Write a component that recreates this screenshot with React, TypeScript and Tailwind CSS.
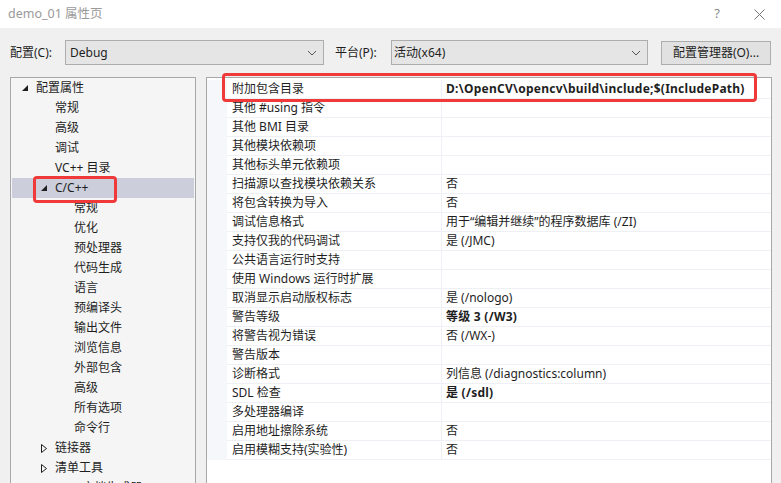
import React from 'react';

const font = { fontFamily: '"Noto Sans", "Noto Sans CJK SC", sans-serif' };

const Down = () => (
  <svg width="6" height="6" viewBox="0 0 6 6" className="shrink-0">
    <polygon points="6,0 6,6 0,6" fill="#1e1e1e" />
  </svg>
);

const Right = () => (
  <svg width="6" height="9" viewBox="0 0 6 9" className="shrink-0">
    <polygon points="0.5,0.5 5.5,4.5 0.5,8.5" fill="none" stroke="#1e1e1e" strokeWidth="1" />
  </svg>
);

const Chevron = () => (
  <svg width="10" height="6" viewBox="0 0 10 6">
    <polyline points="1,1 5,5 9,1" fill="none" stroke="#555" strokeWidth="1" />
  </svg>
);

type TreeItem = { label: string; level: number; arrow?: 'down' | 'right'; selected?: boolean };

const tree: TreeItem[] = [
  { label: '配置属性', level: 0, arrow: 'down' },
  { label: '常规', level: 1 },
  { label: '高级', level: 1 },
  { label: '调试', level: 1 },
  { label: 'VC++ 目录', level: 1 },
  { label: 'C/C++', level: 1, arrow: 'down', selected: true },
  { label: '常规', level: 2 },
  { label: '优化', level: 2 },
  { label: '预处理器', level: 2 },
  { label: '代码生成', level: 2 },
  { label: '语言', level: 2 },
  { label: '预编译头', level: 2 },
  { label: '输出文件', level: 2 },
  { label: '浏览信息', level: 2 },
  { label: '外部包含', level: 2 },
  { label: '高级', level: 2 },
  { label: '所有选项', level: 2 },
  { label: '命令行', level: 2 },
  { label: '链接器', level: 1, arrow: 'right' },
  { label: '清单工具', level: 1, arrow: 'right' },
  { label: 'XML 文档生成器', level: 1, arrow: 'right' },
];

const props: { name: string; value: string; bold?: boolean }[] = [
  { name: '附加包含目录', value: 'D:\\OpenCV\\opencv\\build\\include;$(IncludePath)', bold: true },
  { name: '其他 #using 指令', value: '' },
  { name: '其他 BMI 目录', value: '' },
  { name: '其他模块依赖项', value: '' },
  { name: '其他标头单元依赖项', value: '' },
  { name: '扫描源以查找模块依赖关系', value: '否' },
  { name: '将包含转换为导入', value: '否' },
  { name: '调试信息格式', value: '用于“编辑并继续”的程序数据库 (/ZI)' },
  { name: '支持仅我的代码调试', value: '是 (/JMC)' },
  { name: '公共语言运行时支持', value: '' },
  { name: '使用 Windows 运行时扩展', value: '' },
  { name: '取消显示启动版权标志', value: '是 (/nologo)' },
  { name: '警告等级', value: '等级 3 (/W3)', bold: true },
  { name: '将警告视为错误', value: '否 (/WX-)' },
  { name: '警告版本', value: '' },
  { name: '诊断格式', value: '列信息 (/diagnostics:column)' },
  { name: 'SDL 检查', value: '是 (/sdl)', bold: true },
  { name: '多处理器编译', value: '' },
  { name: '启用地址擦除系统', value: '否' },
  { name: '启用模糊支持(实验性)', value: '否' },
];

// arrow column is 14px, so text lands at x = 36 / 55 / 74
const indent = ['pl-[10px]', 'pl-[29px]', 'pl-[48px]'];

export default function App() {
  return (
    <div className="relative w-[781px] h-[483px] overflow-hidden bg-[#f0f0f0] text-[12px] text-[#1e1e1e]" style={font}>
      <div className="h-[28px] bg-white flex items-center pl-[8px] pr-[16px]">
        <span className="text-[#9a9a9a] text-[12.5px]">demo_01 属性页</span>
        <span className="ml-auto text-[#8a8a8a] text-[13px] mr-[34px]">?</span>
        <svg width="11" height="11" viewBox="0 0 11 11">
          <path d="M0.5 0.5 L10.5 10.5 M10.5 0.5 L0.5 10.5" stroke="#777" strokeWidth="1" />
        </svg>
      </div>

      <div className="pl-[10px] pr-[9px] pt-[12px]">
        <div className="flex items-center h-[25px]">
          <span className="w-[55px]">配置(C):</span>
          <div className="w-[259px] h-[25px] bg-[#e5e5e5] border border-[#adadad] flex items-center pl-[4px] pr-[6px]">
            <span>Debug</span>
            <span className="ml-auto"><Chevron /></span>
          </div>
          <span className="w-[56px] ml-[11px]">平台(P):</span>
          <div className="w-[257px] h-[25px] bg-[#e5e5e5] border border-[#adadad] flex items-center pl-[2px] pr-[6px]">
            <span>活动(x64)</span>
            <span className="ml-auto"><Chevron /></span>
          </div>
          <div className="ml-[13px] w-[110px] h-[24px] bg-[#e1e1e1] border border-[#adadad] flex items-center justify-center">
            配置管理器(O)...
          </div>
        </div>

        <div className="flex gap-[10px] mt-[12px] h-[420px]">
          <div className="w-[186px] bg-[#f5f5f5] border border-[#a8a8a8] px-[1px]">
            {tree.map((t, i) => (
              <div
                key={i}
                className={`h-[20px] flex items-center ${indent[t.level]} ${t.selected ? 'bg-[#cccedb]' : ''}`}
              >
                <span className="w-[14px] shrink-0 flex items-center">
                  {t.arrow === 'down' && <Down />}
                  {t.arrow === 'right' && <Right />}
                </span>
                <span className="whitespace-nowrap">{t.label}</span>
              </div>
            ))}
          </div>

          <div className="flex-1 bg-white border border-[#a8a8a8] flex flex-col">
            <div className="pt-[2px] flex">
              <div className="w-[20px] h-[380px] bg-[#f5f7fb]" />
              <div className="flex-1">
                {props.map((p, i) => (
                  <div key={i} className="h-[19px] flex border-b border-[#eef0f5]">
                    <div className="w-[215px] pl-[5px] flex items-center border-r border-[#eef0f5] whitespace-nowrap">
                      {p.name}
                    </div>
                    <div
                      className={`flex-1 pl-[4px] flex items-center whitespace-nowrap ${
                        p.bold ? 'font-bold tracking-[0.25px]' : ''
                      }`}
                    >
                      {p.value}
                    </div>
                  </div>
                ))}
              </div>
            </div>
          </div>
        </div>
      </div>

      <div className="absolute left-[222px] top-[73px] w-[535px] h-[29px] border-[3px] border-[#f03a3a] rounded-[4px]" />
      <div className="absolute left-[33px] top-[176px] w-[84px] h-[27px] border-[3px] border-[#f03a3a] rounded-[4px]" />
    </div>
  );
}
